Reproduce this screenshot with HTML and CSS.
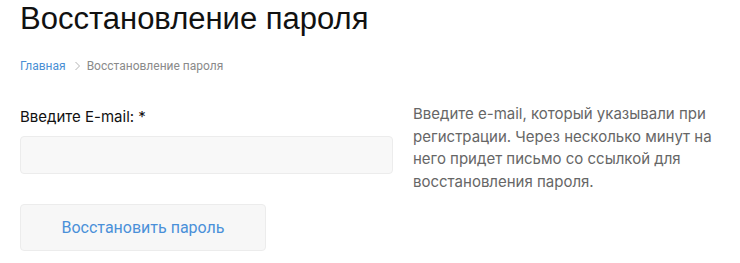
FILE: index.html
```html
<!DOCTYPE html>
<html lang="ru">
<head>
<meta charset="utf-8">
<title>Восстановление пароля</title>
<link rel="stylesheet" href="styles.css">
</head>
<body>
<div class="page">
  <h1 class="title">Восстановление пароля</h1>
  <nav class="crumbs">
    <a class="crumb-link" href="#">Главная</a>
    <svg class="crumb-sep" width="7" height="10" viewBox="0 0 7 10"><path d="M1.5 1 L5.5 5 L1.5 9" fill="none" stroke="#b5b5b5" stroke-width="1"/></svg>
    <span class="crumb-current">Восстановление пароля</span>
  </nav>
  <div class="content">
    <form class="form">
      <label class="label">Введите E-mail: *</label>
      <input class="input" type="text">
      <button class="btn" type="button">Восстановить пароль</button>
    </form>
    <p class="note">Введите e-mail, который указывали при регистрации. Через несколько минут на него придет письмо со ссылкой для восстановления пароля.</p>
  </div>
</div>
</body>
</html>
```
FILE: styles.css
```css
* { box-sizing: border-box; }
body {
  margin: 0;
  background: #fff;
  font-family: Inter, "Noto Sans", sans-serif;
  color: #222;
}
.page {
  padding: 0 20px;
}
.title {
  margin: 0;
  padding-top: 1px;
  font-family: "Liberation Sans", Arial, sans-serif;
  font-weight: 400;
  font-size: 31px;
  line-height: 36px;
  color: #111;
}
.crumbs {
  display: flex;
  align-items: center;
  gap: 5px;
  margin-top: 21px;
  font-family: Roboto, sans-serif;
  font-size: 12px;
  line-height: 16px;
}
.crumb-link { color: #4a8fd4; text-decoration: none; }
.crumb-sep { margin: 0 1px 0 3px; }
.crumb-current { color: #8a8a8a; }
.content {
  display: flex;
  gap: 20px;
  margin-top: 29px;
}
.form {
  display: flex;
  flex-direction: column;
  align-items: flex-start;
  width: 373px;
}
.label {
  font-size: 15px;
  line-height: 20px;
  color: #111;
  margin-top: 4px;
}
.input {
  margin-top: 9px;
  width: 373px;
  height: 38px;
  background: #f8f8f8;
  border: 1px solid #ececec;
  border-radius: 4px;
  outline: none;
}
.btn {
  margin-top: 30px;
  width: 246px;
  height: 47px;
  background: #f7f7f7;
  border: 1px solid #ececec;
  border-radius: 4px;
  font-family: Roboto, sans-serif;
  font-size: 16px;
  color: #4a90d9;
  cursor: pointer;
}
.note {
  margin: 0;
  width: 300px;
  font-size: 15px;
  line-height: 22.5px;
  color: #666;
}
```
